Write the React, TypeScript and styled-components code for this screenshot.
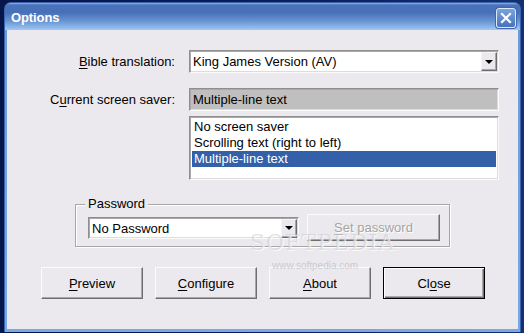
import React from "react";
import styled, { createGlobalStyle } from "styled-components";

const Global = createGlobalStyle`
  html, body { margin: 0; padding: 0; }
  body {
    width: 524px; height: 333px; overflow: hidden;
    background: linear-gradient(90deg, #07164a 0%, #0b1f5c 60%, #14306e 100%);
    font-family: "Liberation Sans", Arial, sans-serif;
    font-size: 13px;
    color: #000;
  }
`;

const Frame = styled.div`
  margin: 2px 0 0 4px;
  width: 517px;
  height: 330px;
  box-sizing: border-box;
  border-radius: 7px 7px 0 0;
  background: linear-gradient(180deg, #5f86c9 0px, #6f9ad8 30px, #7ba8e4 100%);
  border: 1px solid #3a64ad;
  border-bottom: none;
  display: flex;
  flex-direction: column;
`;

const TitleBar = styled.div`
  height: 27px;
  flex: none;
  display: flex;
  align-items: center;
  justify-content: space-between;
  padding: 0 4px 0 6px;
  border-radius: 6px 6px 0 0;
  background: linear-gradient(180deg, #8fb2e6 0px, #4a72ba 2px, #4770b9 35%, #6591d0 65%, #8db8ea 90%, #a2c9f2 100%);
`;

const Title = styled.span`
  color: #fff;
  font-weight: bold;
  font-size: 13px;
  letter-spacing: -0.1px;
  margin-top: 1px;
`;

const CloseX = styled.div`
  width: 20px;
  height: 20px;
  box-sizing: border-box;
  border: 1px solid #dfe9f8;
  border-radius: 3px;
  background: linear-gradient(180deg, #79a3e0, #4673be);
  box-shadow: 0 0 0 1px #3e67ad;
  display: flex;
  align-items: center;
  justify-content: center;
  margin-top: 2px;
`;

const Client = styled.div`
  position: relative;
  margin: 0 2px 3px 2px;
  flex: 1;
  background: #ebe9ed;
  padding: 20px 0 0 0;
  box-sizing: border-box;
`;

const FormGrid = styled.div`
  display: grid;
  grid-template-columns: 168px 310px;
  column-gap: 14px;
  align-items: center;
`;

const Label = styled.label`
  text-align: right;
  white-space: nowrap;
`;

const U = styled.span`
  text-decoration: underline;
  text-underline-offset: 2px;
`;

const Sunken = styled.div<{ $bg?: string; $h?: number }>`
  box-sizing: border-box;
  height: ${(p) => p.$h ?? 23}px;
  background: ${(p) => p.$bg ?? "#fff"};
  border: 1px solid;
  border-color: #8e8e8e #fbfbfb #fbfbfb #8e8e8e;
  box-shadow: inset 1px 1px 0 #a9a9a9, inset -1px -1px 0 #dcdcdc;
  display: flex;
  align-items: center;
  padding-left: 3px;
  white-space: nowrap;
`;

const ComboText = styled.span`
  flex: 1;
`;

const ArrowBtn = styled.div`
  width: 16px;
  height: 19px;
  margin-right: 1px;
  box-sizing: border-box;
  background: #ebe9ed;
  border: 1px solid;
  border-color: #f4f4f4 #6e6e6e #6e6e6e #f4f4f4;
  box-shadow: inset -1px -1px 0 #a8a8a8;
  display: flex;
  align-items: center;
  justify-content: center;
`;

const Tri = styled.div`
  width: 0; height: 0;
  border-left: 4px solid transparent;
  border-right: 4px solid transparent;
  border-top: 4px solid #000;
`;

const Row2Gap = styled.div`
  grid-column: 1 / -1;
  height: 15px;
`;

const ListBox = styled.div`
  grid-column: 2;
  margin-top: 5px;
  height: 64px;
  box-sizing: border-box;
  background: #fff;
  border: 1px solid;
  border-color: #8e8e8e #fbfbfb #fbfbfb #8e8e8e;
  box-shadow: inset 1px 1px 0 #a9a9a9, inset -1px -1px 0 #dcdcdc;
  padding: 2px 2px 0 2px;
`;

const ListItem = styled.div<{ $sel?: boolean }>`
  height: 16px;
  line-height: 16px;
  padding-left: 2px;
  background: ${(p) => (p.$sel ? "#3360a8" : "transparent")};
  color: ${(p) => (p.$sel ? "#fff" : "#000")};
`;

const Group = styled.div`
  position: relative;
  margin: 24px 0 0 68px;
  width: 375px;
  height: 43px;
  box-sizing: border-box;
  border: 1px solid #a6a6a6;
  box-shadow: 1px 1px 0 #fff, inset 1px 1px 0 #fff;
  display: flex;
  align-items: flex-start;
  gap: 8px;
  padding: 9px 0 0 12px;
`;

const Legend = styled.span`
  position: absolute;
  left: 9px;
  top: -8px;
  padding: 0 3px;
  line-height: 14px;
  background: #ebe9ed;
`;

const PwCombo = styled(Sunken)`
  width: 211px;
  margin-top: 3px;
  height: 22px;
`;

const Btn = styled.button<{ $default?: boolean; $w?: number; $h?: number }>`
  font-family: "Liberation Sans", Arial, sans-serif;
  font-size: 13px;
  width: ${(p) => p.$w ?? 102}px;
  height: ${(p) => p.$h ?? 32}px;
  flex: none;
  box-sizing: border-box;
  background: #ebe9ed;
  color: #000;
  padding: 0;
  border: 1px solid;
  border-color: ${(p) => (p.$default ? "#000" : "#fbfbfb #6e6e6e #6e6e6e #fbfbfb")};
  box-shadow: ${(p) =>
    p.$default
      ? "inset 1px 1px 0 #fbfbfb, inset -1px -1px 0 #6e6e6e, inset -2px -2px 0 #a8a8a8"
      : "inset -1px -1px 0 #a8a8a8"};
  &:disabled {
    color: #a5a5a5;
    text-shadow: 1px 1px 0 #fff;
  }
`;

const ButtonRow = styled.div`
  display: flex;
  gap: 12px;
  margin: 20px 0 0 34px;
`;

const Watermark = styled.div`
  position: absolute;
  left: 243px;
  top: 200px;
  font-family: "DejaVu Serif", serif;
  font-size: 22px;
  letter-spacing: 1px;
  color: rgba(200, 200, 205, 0.5);
  text-shadow: 1px 1px 0 rgba(255,255,255,0.7);
  pointer-events: none;
`;

const WatermarkUrl = styled.div`
  position: absolute;
  left: 265px;
  top: 230px;
  font-size: 10px;
  color: rgba(180, 180, 185, 0.6);
  pointer-events: none;
`;

export default function App() {
  return (
    <>
      <Global />
      <Frame>
        <TitleBar>
          <Title>Options</Title>
          <CloseX>
            <svg width="12" height="12" viewBox="0 0 12 12">
              <path d="M2 2 L10 10 M10 2 L2 10" stroke="#fff" strokeWidth="2.2" strokeLinecap="square" />
            </svg>
          </CloseX>
        </TitleBar>
        <Client>
          <FormGrid>
            <Label><U>B</U>ible translation:</Label>
            <Sunken>
              <ComboText>King James Version (AV)</ComboText>
              <ArrowBtn><Tri /></ArrowBtn>
            </Sunken>
            <Row2Gap />
            <Label>C<U>u</U>rrent screen saver:</Label>
            <Sunken $bg="#bfbfbf">Multiple-line text</Sunken>
            <ListBox>
              <ListItem>No screen saver</ListItem>
              <ListItem>Scrolling text (right to left)</ListItem>
              <ListItem $sel>Multiple-line text</ListItem>
            </ListBox>
          </FormGrid>
          <Group>
            <Legend>Password</Legend>
            <PwCombo>
              <ComboText>No Password</ComboText>
              <ArrowBtn><Tri /></ArrowBtn>
            </PwCombo>
            <Btn disabled $w={133} $h={27}>
              <U>S</U>et password
            </Btn>
          </Group>
          <ButtonRow>
            <Btn><U>P</U>review</Btn>
            <Btn><U>C</U>onfigure</Btn>
            <Btn><U>A</U>bout</Btn>
            <Btn $default>Cl<U>o</U>se</Btn>
          </ButtonRow>
          <Watermark>SOFTPEDIA</Watermark>
          <WatermarkUrl>www.softpedia.com</WatermarkUrl>
        </Client>
      </Frame>
    </>
  );
}
